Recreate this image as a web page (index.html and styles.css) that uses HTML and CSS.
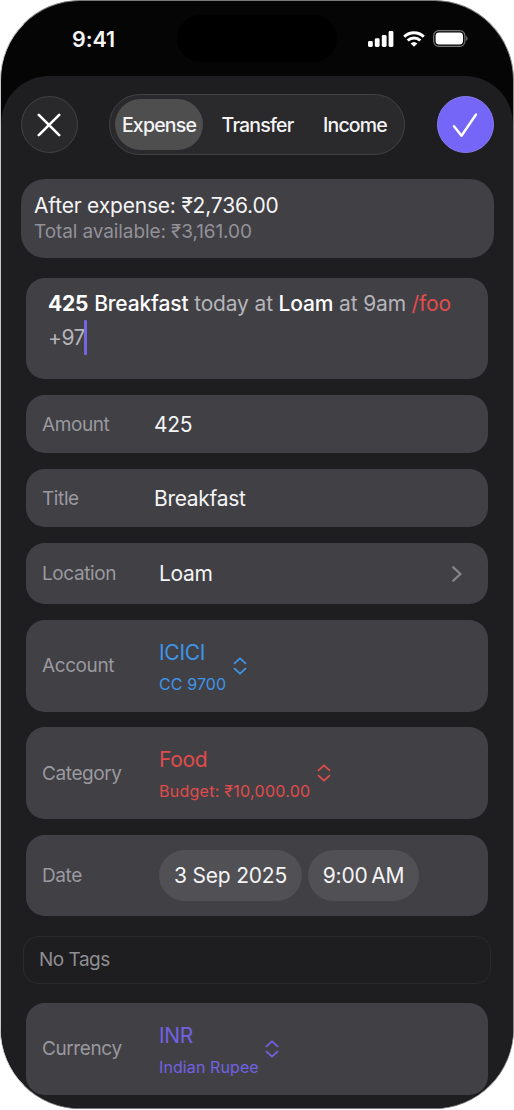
FILE: index.html
```html
<!DOCTYPE html>
<html lang="en">
<head>
<meta charset="utf-8">
<title>New expense</title>
<link rel="stylesheet" href="styles.css">
</head>
<body>
<main class="phone">
  <header class="status">
    <span class="time">9:41</span>
    <span class="island"></span>
    <span class="indicators">
      <svg width="26" height="16" viewBox="0 0 26 16"><g fill="#fff"><rect x="0" y="10" width="4.800" height="6" rx="1.4"/><rect x="6.800" y="7.3" width="4.800" height="8.7" rx="1.4"/><rect x="13.8" y="4" width="4.800" height="12" rx="1.4"/><rect x="20.6" y="0" width="4.800" height="16" rx="1.4"/></g></svg>
      <svg class="wifi" width="22" height="16" viewBox="0 0 22 16" stroke="#fff" stroke-width="3"><path d="M1.200 5.700a14 14 0 0 1 19.600 0"/><path d="M4.700 9.500a9 9 0 0 1 12.600 0"/><path d="M11 15.8 7.600 12.500a5 5 0 0 1 6.800 0z" fill="#fff" stroke="none"/></svg>
      <svg width="35" height="17" viewBox="0 0 35 17"><rect x=".7" y=".7" width="31.2" height="15.6" rx="5" fill="none" stroke="#777" stroke-width="1.2"/><rect x="2.6" y="2.6" width="27.4" height="11.8" rx="3.4" fill="#fff"/><path d="M33.2 6v5c1.8-.7 1.8-4.300 0-5z" fill="#777"/></svg>
    </span>
  </header>
  <section class="sheet">
    <nav class="toolbar">
      <button class="round close" aria-label="Close"><svg width="24" height="24" viewBox="0 0 24 24"><path d="M1.800 1.800l20.400 20.400M22.200 1.800 1.800 22.200"/></svg></button>
      <div class="segments">
        <button class="segment selected">Expense</button>
        <button class="segment">Transfer</button>
        <button class="segment">Income</button>
      </div>
      <button class="round confirm" aria-label="Save"><svg width="26" height="26" viewBox="0 0 26 26"><path d="M2 14.200 9.500 23.700 24 2.500"/></svg></button>
    </nav>
    <div class="summary">
      <div class="after">After expense: ₹2,736.00</div>
      <div class="total">Total available: ₹3,161.00</div>
    </div>
    <div class="card entry">
      <div class="line first"><b>425</b> <strong>Breakfast</strong> today at <strong>Loam</strong> at 9am <em>/foo</em></div>
      <div class="line second"><span>+97</span><i class="caret"></i></div>
    </div>
    <div class="card amount"><span class="label">Amount</span><span class="value">425</span></div>
    <div class="card title"><span class="label">Title</span><span class="value">Breakfast</span></div>
    <div class="card location"><span class="label">Location</span><span class="value">Loam</span>
      <svg class="chevron" width="10" height="16" viewBox="0 0 10 16"><path d="M1.300 1.300 8.500 8l-7.200 6.700"/></svg></div>
    <div class="card tall blue"><span class="label">Account</span>
      <span class="pick"><span class="value">ICICI</span><span class="sub">CC 9700</span></span>
      <svg class="updown" width="14" height="18" viewBox="0 0 14 18"><path d="M1.500 6.300 7 1.300l5.500 5M1.500 11.700l5.500 5 5.500-5"/></svg></div>
    <div class="card tall red"><span class="label">Category</span>
      <span class="pick"><span class="value">Food</span><span class="sub">Budget: ₹10,000.00</span></span>
      <svg class="updown" width="14" height="18" viewBox="0 0 14 18"><path d="M1.500 6.300 7 1.300l5.500 5M1.500 11.700l5.500 5 5.500-5"/></svg></div>
    <div class="card date"><span class="label">Date</span>
      <span class="chip day">3 Sep 2025</span><span class="chip hour">9:00&#8239;AM</span></div>
    <div class="tags">No Tags</div>
    <div class="card tall violet"><span class="label">Currency</span>
      <span class="pick"><span class="value">INR</span><span class="sub">Indian Rupee</span></span>
      <svg class="updown" width="14" height="18" viewBox="0 0 14 18"><path d="M1.500 6.300 7 1.300l5.500 5M1.500 11.700l5.500 5 5.500-5"/></svg></div>
  </section>
</main>
</body>
</html>
```
FILE: styles.css
```css
* { box-sizing: border-box; }
body {
  margin: 0;
  background: #fff;
  font-family: Inter, "Liberation Sans", sans-serif;
  color: #f4f4f5;
}
button { margin: 0; padding: 0; border: 0; background: none; font: inherit; color: inherit; }
svg { display: block; flex: none; fill: none; stroke-linecap: round; stroke-linejoin: round; }
.phone {
  width: 514px;
  height: 1109px;
  overflow: hidden;
  border: 1px solid #77797b;
  border-left-color: #c6c9cc;
  border-right-color: #8b8d8f;
  border-radius: 80px;
  background: #050505;
}
.status {
  display: flex;
  align-items: center;
  height: 75px;
  padding-left: 71px;
}
.time { width: 105px; font-size: 21.500px; font-weight: 600; letter-spacing: -.1px; }
.island { width: 160px; height: 47px; border-radius: 24px; background: #000; }
.indicators { display: flex; align-items: center; margin-left: 31px; gap: 8.500px; }
.indicators svg { stroke-linecap: butt; }
.sheet {
  display: flex;
  flex-direction: column;
  height: 1032px;
  padding: 18px 19.500px 0 19.500px;
  border-radius: 48px 48px 0 0;
  background: #1e1e20;
}
.toolbar { display: flex; align-items: center; justify-content: space-between; height: 61px; }
.round {
  display: grid;
  place-items: center;
  width: 57px;
  height: 57px;
  border-radius: 50%;
}
.close { border: 1px solid #434345; background: #29292b; }
.close path { stroke: #fff; stroke-width: 2.600px; }
.confirm { border: 1px solid #887cf0; background: #7566f8; }
.confirm path { stroke: #fff; stroke-width: 2.400px; }
.segments {
  display: flex;
  width: 296px;
  height: 61px;
  padding: 4px 5px;
  border: 1px solid #424244;
  border-radius: 31px;
  background: #2a2a2c;
}
.segment { height: 51px; width: 98px; border-radius: 26px; font-size: 19.500px; font-weight: 500; letter-spacing: -.8px; white-space: nowrap; }
.segment.selected { width: 88px; background: #4e4e4f; }
.segment:nth-child(2) { width: 109px; }
.segment:nth-child(3) { width: 86px; }
.summary {
  height: 79px;
  margin: 23.500px 0 0 .5px;
  padding: 13px;
  border-radius: 24px;
  background: #414045;
}
.after { height: 27px; font-size: 21px; line-height: 27px; letter-spacing: -.19px; }
.total { height: 26px; color: #929198; font-size: 19px; line-height: 26px; letter-spacing: -.1px; }
.card {
  display: flex;
  align-items: center;
  flex: none;
  width: 462px;
  margin: 16px 0 0 5.500px;
  padding: 0 16px;
  border-radius: 19px;
  background: #414045;
  white-space: nowrap;
}
.label { width: 117px; color: #9a999f; font-size: 19px; letter-spacing: -.4px; }
.value { font-size: 21px; letter-spacing: -.3px; }
.entry { display: block; height: 101px; margin-top: 20.500px; padding: 9px 22px; color: #b5b5ba; font-size: 21px; letter-spacing: -.16px; }
.line.first { height: 33px; line-height: 33px; }
.line.second { display: flex; align-items: center; height: 34px; letter-spacing: -.5px; }
.line b { color: #fff; font-weight: 700; }
.line strong { color: #fff; font-weight: 500; }
.line em { color: #e64c4d; font-style: normal; }
.caret { width: 3px; height: 35px; margin-left: -1px; border-radius: 1px; background: #7565e0; }
.amount, .title { height: 58px; }
.amount .label, .title .label { width: 112px; }
.location { height: 61px; }
.chevron { margin: 0 10px 0 auto; }
.chevron path { stroke: #858489; stroke-width: 2.300px; }
.tall { height: 92px; margin-top: 15.500px; }
.pick { display: flex; flex-direction: column; padding-top: 4px; }
.pick .value { line-height: 32px; }
.sub { font-size: 16px; line-height: 30px; letter-spacing: .1px; }
.updown { margin-left: 7px; }
.violet .updown { margin-left: 6px; }
.updown path { stroke: currentColor; stroke-width: 1.800px; }
.blue .pick, .blue .updown { color: #3e95e9; }
.red .pick, .red .updown { color: #e04c4b; }
.red .sub { letter-spacing: .27px; }
.violet .pick, .violet .updown { color: #7162e3; }
.date { height: 81px; margin-top: 15.500px; }
.chip { display: grid; place-items: center; height: 51px; border-radius: 26px; background: #515055; font-size: 21px; letter-spacing: -.2px; }
.day { width: 143px; }
.hour { width: 111px; margin-left: 6px; }
.tags { flex: none; width: 468px; height: 48px; margin: 20px 0 0 2.500px; padding-left: 15px; border: 1px solid #2b2b2d; border-radius: 15px; color: #8e8e93; font-size: 19px; line-height: 46px; letter-spacing: -.5px; }
.tags + .card { margin-top: 19px; }
```
